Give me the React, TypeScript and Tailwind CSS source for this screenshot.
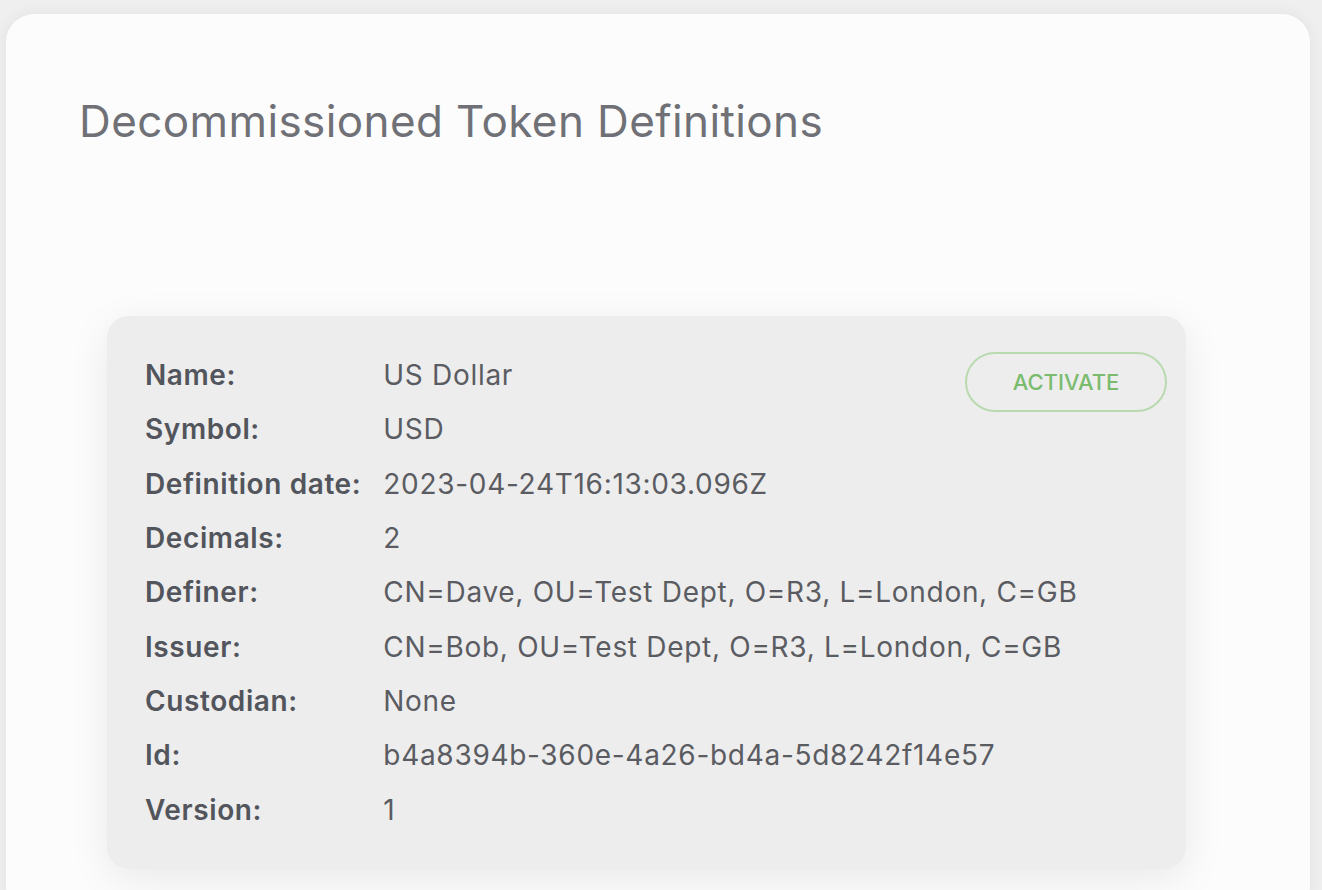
import React from "react";

const rows: [string, string][] = [
  ["Name:", "US Dollar"],
  ["Symbol:", "USD"],
  ["Definition date:", "2023-04-24T16:13:03.096Z"],
  ["Decimals:", "2"],
  ["Definer:", "CN=Dave, OU=Test Dept, O=R3, L=London, C=GB"],
  ["Issuer:", "CN=Bob, OU=Test Dept, O=R3, L=London, C=GB"],
  ["Custodian:", "None"],
  ["Id:", "b4a8394b-360e-4a26-bd4a-5d8242f14e57"],
  ["Version:", "1"],
];

export default function App() {
  return (
    <div
      className="w-[1322px] h-[890px] overflow-hidden bg-[#efefef] pt-[14px] pl-[6px] pr-[12px]"
      style={{ fontFamily: "Inter, 'Noto Sans', sans-serif" }}
    >
      <div className="h-[900px] rounded-[28px] bg-[#fcfcfc] shadow-[0_0_16px_rgba(0,0,0,0.06)] pl-[73px] pt-[78px]">
        <h1 className="text-[44px] leading-[58px] font-normal text-[#707077] tracking-[0.4px]">
          Decommissioned Token Definitions
        </h1>
        <div className="relative mt-[166px] ml-[28px] w-[1079px] rounded-[22px] bg-[#ededed] shadow-[0_10px_40px_rgba(0,0,0,0.08)] pl-[38px] pr-[19px] pt-[32px] pb-[32px]">
          <table className="border-collapse">
            <tbody>
              {rows.map(([k, v]) => (
                <tr key={k} className="h-[54.3px]">
                  <td className="pr-[22px] text-[28px] tracking-[0.6px] font-semibold text-[#52555c] whitespace-nowrap align-middle">
                    {k}
                  </td>
                  <td className="text-[28px] tracking-[0.7px] font-normal text-[#5a5c62] whitespace-nowrap align-middle">
                    {v}
                  </td>
                </tr>
              ))}
            </tbody>
          </table>
          <button className="absolute top-[36px] right-[19px] w-[202px] h-[60px] rounded-full border-2 border-[#b9daaf] text-[#7bbb6e] text-[22px] font-medium uppercase">
            Activate
          </button>
        </div>
      </div>
    </div>
  );
}
